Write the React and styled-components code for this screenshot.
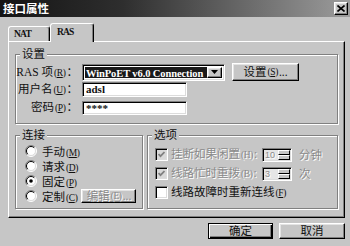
import React from "react";
import styled, { createGlobalStyle, css } from "styled-components";

const FACE = "#c6c6c6";
const UI_FONT = `"Liberation Serif", "Noto Sans CJK SC", serif`;

const GlobalStyle = createGlobalStyle`
  html, body {
    margin: 0;
    padding: 0;
    background: ${FACE};
  }
  body {
    font-family: ${UI_FONT};
    font-size: 11.5px;
    color: #111;
  }
`;

// win98 style bevels
const raised = css`
  border-top: 1px solid #fff;
  border-left: 1px solid #fff;
  border-right: 1px solid #000;
  border-bottom: 1px solid #000;
  box-shadow: inset -1px -1px 0 #808080, inset 1px 1px 0 #e4e4e4;
`;

const sunken = css`
  border-top: 1px solid #808080;
  border-left: 1px solid #808080;
  border-right: 1px solid #fff;
  border-bottom: 1px solid #fff;
  box-shadow: inset 1px 1px 0 #000, inset -1px -1px 0 #dcdcdc;
`;

const greyed = css`
  color: #8a8a8a;
  text-shadow: 1px 1px 0 #fff;
`;

const Window = styled.div`
  width: 350px;
  height: 246px;
  background: ${FACE};
  display: flex;
  flex-direction: column;
  overflow: hidden;
`;

const TitleBar = styled.div`
  height: 17px;
  flex: none;
  display: flex;
  align-items: center;
  justify-content: space-between;
  padding: 0 2px 0 3px;
  background: linear-gradient(to right, #141414, #2e2e2e 35%, #9c9c9c);
`;

const Title = styled.span`
  color: #fff;
  font-family: "Noto Sans CJK SC", sans-serif;
  font-weight: bold;
  font-size: 11.5px;
  line-height: 13px;
`;

const CloseButton = styled.div`
  box-sizing: border-box;
  width: 14px;
  height: 13px;
  background: ${FACE};
  ${raised};
  display: flex;
  align-items: center;
  justify-content: center;
`;

const Body = styled.div`
  display: flex;
  flex-direction: column;
  padding: 6px 5px 0 8px;
`;

const TabRow = styled.div`
  height: 18px;
  display: flex;
  align-items: flex-end;
`;

const Tab = styled.div`
  box-sizing: border-box;
  position: relative;
  z-index: ${(p) => (p.$active ? 1 : 0)};
  width: ${(p) => p.$w}px;
  height: ${(p) => (p.$active ? 19 : 15)}px;
  margin-bottom: ${(p) => (p.$active ? -1 : 0)}px;
  padding: ${(p) => (p.$active ? "3px 0 0 6px" : "2px 0 0 5px")};
  background: ${FACE};
  border-top: 1px solid #fff;
  border-left: 1px solid #fff;
  border-right: 1px solid #000;
  border-radius: 3px 3px 0 0;
  box-shadow: inset -1px 0 0 #808080;
  font-family: "Liberation Serif", serif;
  font-weight: bold;
  font-size: 9.5px;
  letter-spacing: -0.8px;
  line-height: 10px;
`;

const Panel = styled.div`
  box-sizing: border-box;
  width: 337px;
  height: 177px;
  padding: 6px 5px 0 6px;
  display: flex;
  flex-direction: column;
  gap: 5px;
  border-top: 1px solid #fff;
  border-left: 1px solid #fff;
  border-right: 1px solid #000;
  border-bottom: 1px solid #000;
  box-shadow: inset -1px -1px 0 #808080;
`;

const Group = styled.fieldset`
  box-sizing: border-box;
  margin: 0;
  padding: 0;
  min-width: 0;
  width: ${(p) => p.$w}px;
  height: ${(p) => p.$h}px;
  border: 1px solid #808080;
  box-shadow: inset 1px 1px 0 #fff, 1px 1px 0 #fff;
`;

const Legend = styled.legend`
  margin-left: 4px;
  padding: 0 2px;
  font-size: 11.5px;
  line-height: 12px;
  background: ${FACE};
`;

const GroupRow = styled.div`
  display: flex;
  gap: 4px;
`;

const SettingsBody = styled.div`
  display: flex;
  flex-direction: column;
  padding-top: 3px;
`;

const FieldRow = styled.div`
  display: flex;
  align-items: center;
  height: ${(p) => p.$h}px;
  margin-top: ${(p) => p.$top || 0}px;
`;

const FieldLabel = styled.span`
  width: 62px;
  padding-right: 4px;
  flex: none;
  text-align: right;
  white-space: nowrap;
  line-height: 12px;
`;

// "(R)" style access-key hint, a touch narrower than the cjk text
const Hint = styled.span`
  font-size: 9.5px;
  letter-spacing: -0.4px;
  margin: 0 1px;
`;

const Key = styled.span`
  text-decoration: underline;
`;

const Mn = ({ k, plain }) => (
  <Hint>
    ({plain ? k : <Key>{k}</Key>})
  </Hint>
);

const Combo = styled.div`
  box-sizing: border-box;
  width: 143px;
  height: 17px;
  padding: 2px;
  display: flex;
  background: #fff;
  ${sunken};
`;

const ComboValue = styled.div`
  flex: 1;
  min-width: 0;
  overflow: hidden;
  white-space: nowrap;
  padding-left: 1px;
  background: #1a1a1a;
  color: #fff;
  font-family: "Liberation Serif", serif;
  font-weight: bold;
  font-size: 10.5px;
  letter-spacing: -0.1px;
  line-height: 13px;
`;

const DropButton = styled.div`
  box-sizing: border-box;
  width: 15px;
  flex: none;
  background: ${FACE};
  ${raised};
  display: flex;
  align-items: center;
  justify-content: center;
`;

const TextField = styled.div`
  box-sizing: border-box;
  width: 105px;
  height: ${(p) => p.$h}px;
  padding: 0 3px;
  background: #fff;
  ${sunken};
  font-family: "Liberation Serif", serif;
  font-weight: bold;
  font-size: 11px;
  line-height: ${(p) => p.$h - 2}px;
`;

const Button = styled.div`
  box-sizing: border-box;
  width: ${(p) => p.$w}px;
  height: ${(p) => p.$h}px;
  margin-left: ${(p) => p.$left || 0}px;
  flex: none;
  display: flex;
  align-items: center;
  justify-content: center;
  background: ${FACE};
  white-space: nowrap;
  line-height: 12px;
  ${raised};
  ${(p) =>
    p.$default &&
    css`
      border: 1px solid #000;
      box-shadow: inset 1px 1px 0 #fff, inset -1px -1px 0 #000,
        inset -2px -2px 0 #808080;
    `}
  ${(p) => p.$disabled && greyed};
`;

const RadioList = styled.div`
  display: flex;
  flex-direction: column;
  padding: 2px 0 0 9px;
`;

const RadioRow = styled.div`
  display: flex;
  align-items: center;
  height: 15px;
  gap: 5px;
  white-space: nowrap;
`;

const CheckList = styled.div`
  display: flex;
  flex-direction: column;
  padding: 4px 0 0 7px;
`;

const CheckRow = styled.div`
  display: flex;
  align-items: center;
  height: 19px;
  white-space: nowrap;
`;

const CheckBox = styled.span`
  box-sizing: border-box;
  width: 13px;
  height: 13px;
  flex: none;
  margin-right: 3px;
  display: flex;
  align-items: center;
  justify-content: center;
  background: ${(p) => (p.$disabled ? "#d9d9d9" : "#fff")};
  ${sunken};
`;

const CheckText = styled.span`
  width: ${(p) => (p.$w ? `${p.$w}px` : "auto")};
  flex: none;
  line-height: 12px;
  ${(p) => p.$disabled && greyed};
`;

const Spinner = styled.div`
  box-sizing: border-box;
  width: 30px;
  height: 14px;
  display: flex;
  background: #e6e6e6;
  ${sunken};
`;

const SpinValue = styled.span`
  flex: 1;
  padding-left: 2px;
  font-family: "Liberation Sans", sans-serif;
  font-size: 9px;
  line-height: 12px;
  ${greyed};
`;

const SpinArrows = styled.div`
  width: 12px;
  display: flex;
  flex-direction: column;
  padding: 1px 1px 1px 0;
`;

const SpinHalf = styled.div`
  flex: 1;
  background: ${FACE};
  border-top: 1px solid #fff;
  border-left: 1px solid #fff;
  border-bottom: 1px solid #000;
  border-right: 1px solid #000;
`;

const Unit = styled.span`
  margin-left: 7px;
  line-height: 12px;
  ${greyed};
`;

const ButtonBar = styled.div`
  display: flex;
  justify-content: flex-end;
  gap: 6px;
  padding-top: 5px;
`;

const Radio = ({ checked }) => (
  <svg width="12" height="12" viewBox="0 0 12 12">
    <circle cx="6" cy="6" r="5" fill="#fff" />
    <path d="M9.9 2.1A5.5 5.5 0 0 0 2.1 9.9" fill="none" stroke="#808080" />
    <path d="M2.1 9.9A5.5 5.5 0 0 0 9.9 2.1" fill="none" stroke="#fff" />
    <path d="M9.2 2.8A4.5 4.5 0 0 0 2.8 9.2" fill="none" stroke="#000" />
    <path d="M2.8 9.2A4.5 4.5 0 0 0 9.2 2.8" fill="none" stroke="#dcdcdc" />
    {checked && <circle cx="6" cy="6" r="1.8" fill="#000" />}
  </svg>
);

const Check = ({ checked, disabled }) => (
  <CheckBox $disabled={disabled}>
    {checked && (
      <svg width="7" height="7" viewBox="0 0 7 7">
        <polyline
          points="0.5,3 2.5,5.2 6.5,1"
          fill="none"
          stroke={disabled ? "#808080" : "#000"}
          strokeWidth="1.8"
        />
      </svg>
    )}
  </CheckBox>
);

const Spin = ({ value }) => (
  <Spinner>
    <SpinValue>{value}</SpinValue>
    <SpinArrows>
      <SpinHalf />
      <SpinHalf />
    </SpinArrows>
  </Spinner>
);

const radios = [
  { text: "手动", key: "M" },
  { text: "请求", key: "D" },
  { text: "固定", key: "P", checked: true },
];

export default function App() {
  return (
    <>
      <GlobalStyle />
      <Window>
        <TitleBar>
          <Title>接口属性</Title>
          <CloseButton>
            <svg width="8" height="7" viewBox="0 0 8 7">
              <path d="M0.5 0.5L7.5 6.5M7.5 0.5L0.5 6.5" stroke="#000" strokeWidth="1.6" />
            </svg>
          </CloseButton>
        </TitleBar>

        <Body>
          <TabRow>
            <Tab $w={42}>NAT</Tab>
            <Tab $w={44} $active>
              RAS
            </Tab>
          </TabRow>

          <Panel>
            <Group $w={323} $h={76}>
              <Legend>设置</Legend>
              <SettingsBody>
                <FieldRow $h={18}>
                  <FieldLabel>
                    RAS 项<Mn k="R" />：
                  </FieldLabel>
                  <Combo>
                    <ComboValue>WinPoET v6.0 Connection</ComboValue>
                    <DropButton>
                      <svg width="7" height="4" viewBox="0 0 7 4">
                        <path d="M0 0H7L3.5 4Z" fill="#000" />
                      </svg>
                    </DropButton>
                  </Combo>
                  <Button $w={67} $h={18} $left={7}>
                    设置<Mn k="S" />...
                  </Button>
                </FieldRow>
                <FieldRow $h={15} $top={1}>
                  <FieldLabel>
                    用户名<Mn k="U" />：
                  </FieldLabel>
                  <TextField $h={15}>adsl</TextField>
                </FieldRow>
                <FieldRow $h={15} $top={3}>
                  <FieldLabel>
                    密码<Mn k="P" />：
                  </FieldLabel>
                  <TextField $h={14}>****</TextField>
                </FieldRow>
              </SettingsBody>
            </Group>

            <GroupRow>
              <Group $w={128} $h={80}>
                <Legend>连接</Legend>
                <RadioList>
                  {radios.map((r) => (
                    <RadioRow key={r.key}>
                      <Radio checked={r.checked} />
                      <span>
                        {r.text}
                        <Mn k={r.key} />
                      </span>
                    </RadioRow>
                  ))}
                  <RadioRow>
                    <Radio />
                    <span>
                      定制<Mn k="C" />
                    </span>
                    <Button $w={55} $h={14} $left={-2} $disabled>
                      编辑<Mn k="E" plain />...
                    </Button>
                  </RadioRow>
                </RadioList>
              </Group>

              <Group $w={191} $h={80}>
                <Legend>选项</Legend>
                <CheckList>
                  <CheckRow>
                    <Check checked disabled />
                    <CheckText $w={91} $disabled>
                      挂断如果闲置<Mn k="H" plain />:
                    </CheckText>
                    <Spin value="10" />
                    <Unit>分钟</Unit>
                  </CheckRow>
                  <CheckRow>
                    <Check checked disabled />
                    <CheckText $w={91} $disabled>
                      线路忙时重拨<Mn k="B" plain />:
                    </CheckText>
                    <Spin value="3" />
                    <Unit>次</Unit>
                  </CheckRow>
                  <CheckRow>
                    <Check />
                    <CheckText>
                      线路故障时重新连线<Mn k="F" />
                    </CheckText>
                  </CheckRow>
                </CheckList>
              </Group>
            </GroupRow>
          </Panel>

          <ButtonBar>
            <Button $w={65} $h={16} $default>
              确定
            </Button>
            <Button $w={66} $h={16}>
              取消
            </Button>
          </ButtonBar>
        </Body>
      </Window>
    </>
  );
}
